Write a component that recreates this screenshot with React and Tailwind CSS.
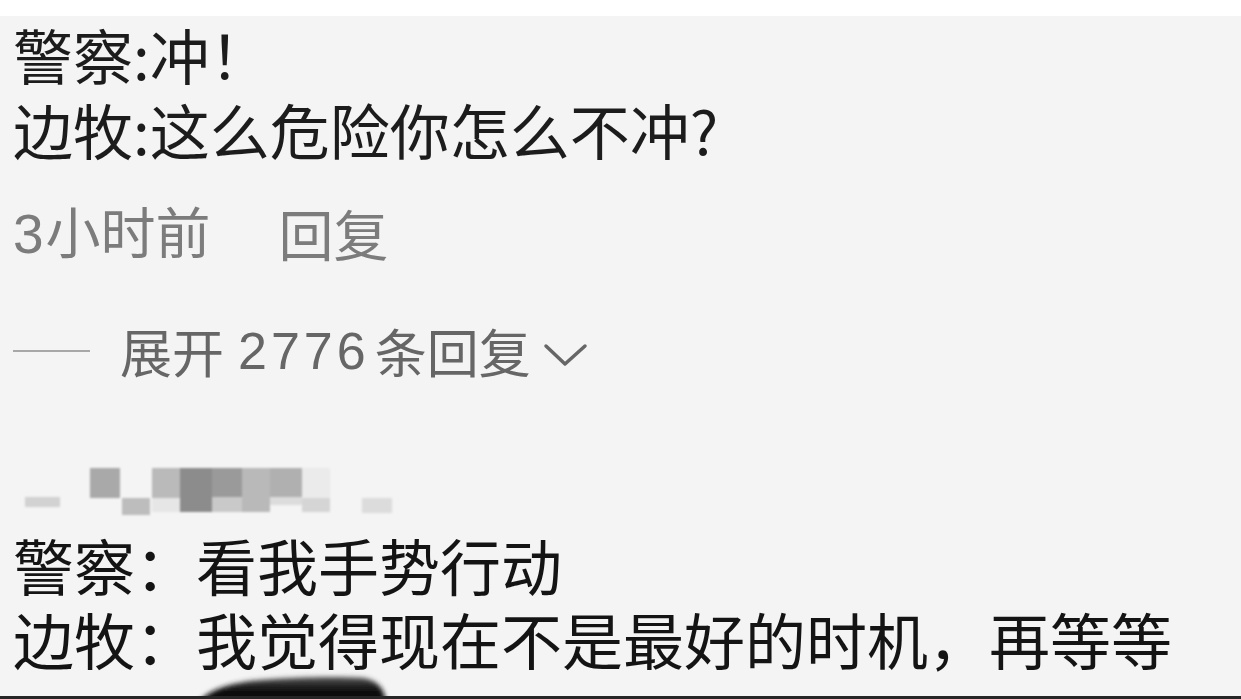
export default function App() {
  const cjk = "font-['Noto_Sans_CJK_SC','Noto_Sans',sans-serif]"
  const digits = "font-['Liberation_Sans','Noto_Sans',sans-serif]"

  return (
    <div className={`relative w-[1241px] h-[699px] overflow-hidden bg-[#f4f4f4] flex flex-col ${cjk}`}>
      {/* top white band */}
      <div className="h-[16px] bg-white shrink-0" />

      <div className="flex flex-col px-[13px]">
        {/* first comment */}
        <p className="text-[60px] leading-[75px] text-[#1c1c1c] whitespace-nowrap">警察:冲！</p>
        <p className="text-[60px] leading-[75px] text-[#1c1c1c] whitespace-nowrap">边牧:这么危险你怎么不冲?</p>

        {/* meta */}
        <div className="mt-[33px] flex items-center gap-[68px] text-[55px] leading-[60px] text-[#7c7c7c] whitespace-nowrap">
          <span>
            <span className={`${digits} tracking-[2px]`}>3</span>小时前
          </span>
          <span>回复</span>
        </div>

        {/* expand replies */}
        <div className="mt-[57px] flex items-center text-[52px] leading-[60px] text-[#666] whitespace-nowrap">
          <div className="w-[77px] h-[2px] bg-[#a8a8a8]" />
          <span className="ml-[30px]">展开</span>
          <span className={`ml-[14px] ${digits} tracking-[4px]`}>2776</span>
          <span className="ml-[5px]">条回复</span>
          <svg className="ml-[12px] mt-[6px]" width="46" height="30" viewBox="0 0 46 30" fill="none">
            <polyline points="3,7 22,25 42,7" stroke="#666" strokeWidth="3.5" strokeLinecap="round" strokeLinejoin="round" />
          </svg>
        </div>

        {/* pixelated user name */}
        <svg className="mt-[86px] blur-[1px]" width="400" height="50" viewBox="0 0 400 50">
          <rect x="12" y="30" width="35" height="10" fill="#d2d2d2" />
          <rect x="77" y="1" width="30" height="30" fill="#a9a9a9" />
          <rect x="109" y="31" width="28" height="17" fill="#bdbdbd" />
          <rect x="139" y="1" width="28" height="30" fill="#bababa" />
          <rect x="139" y="31" width="28" height="14" fill="#e6e6e6" />
          <rect x="167" y="1" width="32" height="44" fill="#8c8c8c" />
          <rect x="199" y="1" width="30" height="29" fill="#9a9a9a" />
          <rect x="199" y="30" width="30" height="15" fill="#c9c9c9" />
          <rect x="229" y="1" width="28" height="44" fill="#b9b9b9" />
          <rect x="257" y="1" width="32" height="29" fill="#b0b0b0" />
          <rect x="257" y="30" width="32" height="8" fill="#dcdcdc" />
          <rect x="289" y="1" width="28" height="30" fill="#ebebeb" />
          <rect x="289" y="31" width="28" height="14" fill="#d5d5d5" />
          <rect x="349" y="31" width="30" height="15" fill="#dcdcdc" />
        </svg>

        {/* second comment */}
        <p className="mt-[11px] text-[61px] leading-[74px] text-[#141414] whitespace-nowrap">警察：看我手势行动</p>
        <p className="text-[61px] leading-[74px] text-[#141414] whitespace-nowrap">边牧：我觉得现在不是最好的时机，再等等</p>
      </div>

      {/* finger shadow at the bottom */}
      <svg className="absolute left-[190px] top-[664px]" width="210" height="35" viewBox="0 0 210 35">
        <defs>
          <linearGradient id="shade" x1="0" y1="0" x2="0" y2="1">
            <stop offset="0" stopColor="#555" />
            <stop offset="0.45" stopColor="#151515" />
            <stop offset="1" stopColor="#050505" />
          </linearGradient>
          <filter id="soft" x="-10%" y="-40%" width="120%" height="180%">
            <feGaussianBlur stdDeviation="2.4" />
          </filter>
        </defs>
        <path d="M8 38 C18 28 32 21 60 17 C100 13 150 12 174 14 C188 17 194 24 196 38 Z" fill="url(#shade)" filter="url(#soft)" />
      </svg>
      {/* bottom dark edge */}
      <div className="absolute left-0 right-0 bottom-0 h-[3px] bg-[#262626]" />
    </div>
  )
}
